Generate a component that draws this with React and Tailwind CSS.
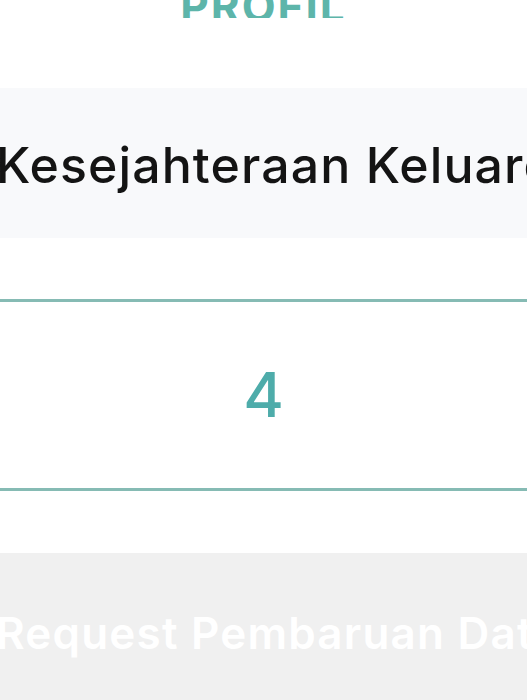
export default function App() {
  return (
    <div
      className="w-[527px] h-[700px] overflow-hidden bg-white flex flex-col"
      style={{ fontFamily: "Inter, 'Noto Sans', sans-serif" }}
    >
      {/* page title */}
      <div className="shrink-0 h-[18px] overflow-hidden flex justify-center">
        <h1 className="-mt-[16px] text-[44px] leading-none font-bold tracking-[2px] text-[#5db5aa] whitespace-nowrap">
          PROFIL
        </h1>
      </div>

      {/* section label */}
      <div className="shrink-0 mt-[70px] h-[150px] w-full bg-[#f8f9fb] flex items-center">
        <span className="-ml-[4px] mt-[4px] whitespace-nowrap text-[50px] leading-none font-medium tracking-[1.1px] text-[#141414]">
          Kesejahteraan Keluarga
        </span>
      </div>

      {/* value */}
      <div className="shrink-0 mt-[61px] h-[192px] w-full border-y-[3px] border-[#86bbb4] flex items-center justify-center">
        <span className="text-[62px] leading-none font-medium text-[#4eacaa]">4</span>
      </div>

      {/* action */}
      <div className="shrink-0 mt-[62px] h-[160px] w-full bg-[#f0f0f0] flex items-center overflow-hidden">
        <button className="-ml-[4px] whitespace-nowrap text-[44px] leading-none font-semibold tracking-[1.2px] text-white">
          Request Pembaruan Data
        </button>
      </div>
    </div>
  );
}
